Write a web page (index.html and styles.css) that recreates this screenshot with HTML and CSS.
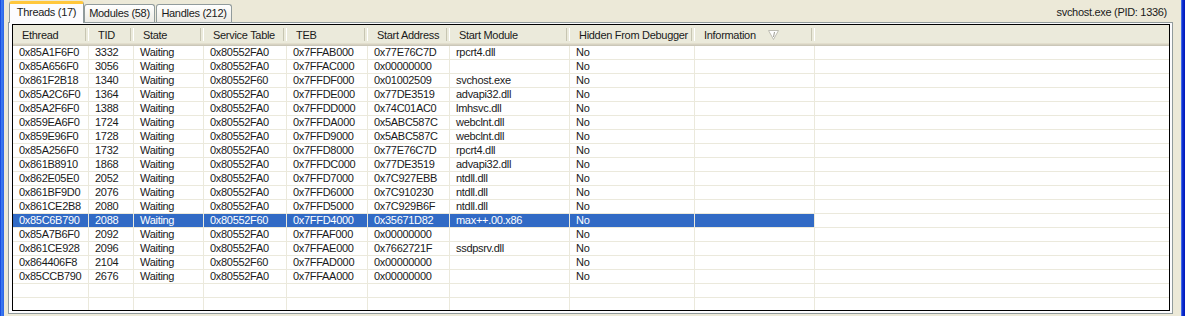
FILE: index.html
```html
<!DOCTYPE html>
<html lang="en">
<head>
  <meta charset="UTF-8" />
  <title>svchost.exe threads</title>
  <link rel="stylesheet" href="styles.css">
</head>
<body>
  <div class="frame">
    <div class="edge-left"></div>

    <div class="pane">
      <div class="tabbar">
        <div class="tab active">Threads (17)</div>
        <div class="tab modules">Modules (58)</div>
        <div class="tab handles">Handles (212)</div>
        <span class="proc">svchost.exe (PID: 1336)</span>
      </div>

      <div class="page">
        <div class="listview">
          <table>
            <thead>
              <tr>
                <th class="c1">Ethread</th>
                <th class="c2">TID</th>
                <th class="c3">State</th>
                <th class="c4">Service Table</th>
                <th class="c5">TEB</th>
                <th class="c6">Start Address</th>
                <th class="c7">Start Module</th>
                <th class="c8">Hidden From Debugger</th>
                <th class="c9">Information<svg class="filter" width="11" height="10" viewBox="0 0 11 10">
                    <polygon points="0.5,0.5 10.5,0.5 5.5,9.5" fill="#fff" stroke="#bdbcb2" />
                    <line x1="6.5" y1="2" x2="5.5" y2="7" stroke="#9d9c92" />
                  </svg></th>
                <th class="fill"></th>
              </tr>
            </thead>
            <tbody>
              <tr><td>0x85A1F6F0</td><td>3332</td><td>Waiting</td><td>0x80552FA0</td><td>0x7FFAB000</td><td>0x77E76C7D</td><td>rpcrt4.dll</td><td>No</td><td></td><td class="fill"></td></tr>
              <tr><td>0x85A656F0</td><td>3056</td><td>Waiting</td><td>0x80552FA0</td><td>0x7FFAC000</td><td>0x00000000</td><td></td><td>No</td><td></td><td class="fill"></td></tr>
              <tr><td>0x861F2B18</td><td>1340</td><td>Waiting</td><td>0x80552F60</td><td>0x7FFDF000</td><td>0x01002509</td><td>svchost.exe</td><td>No</td><td></td><td class="fill"></td></tr>
              <tr><td>0x85A2C6F0</td><td>1364</td><td>Waiting</td><td>0x80552FA0</td><td>0x7FFDE000</td><td>0x77DE3519</td><td>advapi32.dll</td><td>No</td><td></td><td class="fill"></td></tr>
              <tr><td>0x85A2F6F0</td><td>1388</td><td>Waiting</td><td>0x80552FA0</td><td>0x7FFDD000</td><td>0x74C01AC0</td><td>lmhsvc.dll</td><td>No</td><td></td><td class="fill"></td></tr>
              <tr><td>0x859EA6F0</td><td>1724</td><td>Waiting</td><td>0x80552FA0</td><td>0x7FFDA000</td><td>0x5ABC587C</td><td>webclnt.dll</td><td>No</td><td></td><td class="fill"></td></tr>
              <tr><td>0x859E96F0</td><td>1728</td><td>Waiting</td><td>0x80552FA0</td><td>0x7FFD9000</td><td>0x5ABC587C</td><td>webclnt.dll</td><td>No</td><td></td><td class="fill"></td></tr>
              <tr><td>0x85A256F0</td><td>1732</td><td>Waiting</td><td>0x80552FA0</td><td>0x7FFD8000</td><td>0x77E76C7D</td><td>rpcrt4.dll</td><td>No</td><td></td><td class="fill"></td></tr>
              <tr><td>0x861B8910</td><td>1868</td><td>Waiting</td><td>0x80552FA0</td><td>0x7FFDC000</td><td>0x77DE3519</td><td>advapi32.dll</td><td>No</td><td></td><td class="fill"></td></tr>
              <tr><td>0x862E05E0</td><td>2052</td><td>Waiting</td><td>0x80552FA0</td><td>0x7FFD7000</td><td>0x7C927EBB</td><td>ntdll.dll</td><td>No</td><td></td><td class="fill"></td></tr>
              <tr><td>0x861BF9D0</td><td>2076</td><td>Waiting</td><td>0x80552FA0</td><td>0x7FFD6000</td><td>0x7C910230</td><td>ntdll.dll</td><td>No</td><td></td><td class="fill"></td></tr>
              <tr><td>0x861CE2B8</td><td>2080</td><td>Waiting</td><td>0x80552FA0</td><td>0x7FFD5000</td><td>0x7C929B6F</td><td>ntdll.dll</td><td>No</td><td></td><td class="fill"></td></tr>
              <tr class="selected"><td>0x85C6B790</td><td>2088</td><td>Waiting</td><td>0x80552F60</td><td>0x7FFD4000</td><td>0x35671D82</td><td>max++.00.x86</td><td>No</td><td></td><td class="fill"></td></tr>
              <tr><td>0x85A7B6F0</td><td>2092</td><td>Waiting</td><td>0x80552FA0</td><td>0x7FFAF000</td><td>0x00000000</td><td></td><td>No</td><td></td><td class="fill"></td></tr>
              <tr><td>0x861CE928</td><td>2096</td><td>Waiting</td><td>0x80552FA0</td><td>0x7FFAE000</td><td>0x7662721F</td><td>ssdpsrv.dll</td><td>No</td><td></td><td class="fill"></td></tr>
              <tr><td>0x864406F8</td><td>2104</td><td>Waiting</td><td>0x80552F60</td><td>0x7FFAD000</td><td>0x00000000</td><td></td><td>No</td><td></td><td class="fill"></td></tr>
              <tr><td>0x85CCB790</td><td>2676</td><td>Waiting</td><td>0x80552FA0</td><td>0x7FFAA000</td><td>0x00000000</td><td></td><td>No</td><td></td><td class="fill"></td></tr>
              <!-- empty rows below the last thread -->
              <tr><td></td><td></td><td></td><td></td><td></td><td></td><td></td><td></td><td></td><td class="fill"></td></tr>
              <tr><td></td><td></td><td></td><td></td><td></td><td></td><td></td><td></td><td></td><td class="fill"></td></tr>
            </tbody>
          </table>
        </div>
      </div>
    </div>

    <div class="edge-right"></div>
  </div>
</body>
</html>
```

FILE: styles.css
```css
* {
  box-sizing: border-box;
}

body {
  margin: 0;
  background: #ece9d8;
  font-family: 'Liberation Sans', Arial, sans-serif;
  font-size: 11px;
  letter-spacing: -0.3px;
  color: #000;
}

.frame {
  display: flex;
  height: 316px;
}

.edge-left {
  width: 4px;
  background: linear-gradient(to right, #0b3ad8, #3d7cf2 40%, #2a63e6);
}

.edge-right {
  width: 4px;
  background: linear-gradient(to right, #5a86ee, #0a2bd0 40%, #0019b8);
}

.pane {
  flex: 1;
  display: flex;
  flex-direction: column;
  min-width: 0;
}

/* tabs */

.tabbar {
  height: 22px;
  display: flex;
  align-items: flex-end;
  padding-left: 5px;
  padding-right: 14px;
}

.tab {
  height: 18px;
  line-height: 17px;
  text-align: center;
  white-space: nowrap;
  color: #1a1a1a;
  border: 1px solid #919b9c;
  border-bottom: none;
  border-radius: 3px 3px 0 0;
  background: linear-gradient(#ffffff, #f4f3ee 60%, #ecebe5);
}

.tab.active {
  width: 75px;
  height: 22px;
  line-height: 16px;
  margin-bottom: -1px;
  position: relative;
  z-index: 1;
  border-top: 3px solid #ffc73c;
  background: #fcfcfe;
}

.tab.modules {
  width: 71px;
}

.tab.handles {
  width: 76px;
  margin-left: 1px;
}

.proc {
  margin-left: auto;
  align-self: center;
  padding-top: 2px;
  color: #1a1a1a;
}

.page {
  flex: 1;
  display: flex;
  margin: 0 8px 2px 4px;
  padding: 1px 2px 2px 3px;
  border: 1px solid #919b9c;
  background: #fcfcfe;
  min-height: 0;
}

/* list view */

.listview {
  flex: 1;
  border: 1px solid #000;
  background: #fff;
  overflow: hidden;
}

table {
  width: 100%;
  table-layout: fixed;
  border-collapse: separate;
  border-spacing: 0;
}

th {
  position: relative;
  height: 21px;
  padding: 0 0 1px 9px;
  text-align: left;
  font-weight: normal;
  white-space: nowrap;
  color: #1a1a1a;
  background: linear-gradient(to bottom, #ebeadb 0, #ebeadb 18px, #e2decd 18px, #e2decd 19px, #d6d2c2 19px, #d6d2c2 20px, #cbc7b8 20px);
}

th::after {
  content: "";
  position: absolute;
  right: 0;
  top: 3px;
  bottom: 5px;
  width: 2px;
  border-left: 1px solid #c7c5b2;
  border-right: 1px solid #fff;
}

th.fill::after {
  display: none;
}

.filter {
  margin-left: 12px;
  vertical-align: -1px;
}

.c1 { width: 76px; }
.c2 { width: 45px; }
.c3 { width: 70px; }
.c4 { width: 83px; }
.c5 { width: 81px; }
.c6 { width: 82px; }
.c7 { width: 120px; }
.c8 { width: 125px; }
.c9 { width: 120px; }

td {
  height: 14px;
  line-height: 13px;
  padding: 0 0 0 6px;
  white-space: nowrap;
  overflow: hidden;
  color: #1a1a1a;
  border-right: 1px solid #ebe9dc;
  border-bottom: 1px solid #ebe9dc;
}

td.fill {
  border-right: none;
}

tr.selected td {
  background: #316ac5;
  color: #fff;
}

tr.selected td.fill {
  background: #fff;
}
```
